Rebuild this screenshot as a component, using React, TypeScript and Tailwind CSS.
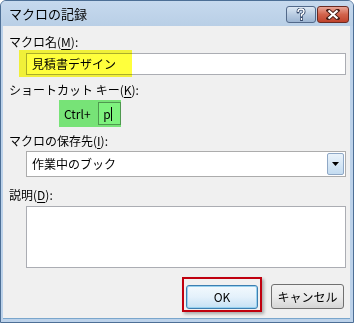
const font = { fontFamily: '"Noto Sans CJK JP", "Noto Sans", sans-serif' }

function Label({ text, keyChar }: { text: string; keyChar: string }) {
  return (
    <div className="h-[16px] text-[12px] leading-[16px] text-black">
      {text}(<span className="underline underline-offset-2">{keyChar}</span>):
    </div>
  )
}

function TitleBar() {
  return (
    <div className="h-[25px] flex items-center justify-between pl-[8px] pr-[4px] bg-gradient-to-b from-[#c6d9ee] to-[#b9cfe6]">
      <span className="text-[13px] text-black">マクロの記録</span>
      <div className="flex items-center gap-[1px] pt-[1px]">
        <div className="w-[30px] h-[17px] rounded-[3px] border border-[#52698a] bg-gradient-to-b from-[#dce7f3] via-[#b9cce2] to-[#9db5d2] flex items-center justify-center">
          <svg width="10" height="13" viewBox="0 0 10 13">
            <path d="M2 4 Q2 1 5 1 Q8 1 8 3.5 Q8 5.5 5.5 6.5 L5.5 8.5 M5.5 10 L5.5 12" fill="none" stroke="#34486a" strokeWidth="3" strokeLinecap="round" />
            <path d="M2 4 Q2 1 5 1 Q8 1 8 3.5 Q8 5.5 5.5 6.5 L5.5 8.5 M5.5 10 L5.5 12" fill="none" stroke="#ffffff" strokeWidth="1.4" />
          </svg>
        </div>
        <div className="w-[32px] h-[17px] rounded-[3px] border border-[#6a2a22] bg-gradient-to-b from-[#e8a597] via-[#d1634c] to-[#c0432c] flex items-center justify-center">
          <svg width="14" height="11" viewBox="0 0 14 11">
            <path d="M2.5 1.5 L11.5 9.5 M11.5 1.5 L2.5 9.5" stroke="#4a1e18" strokeWidth="4" strokeLinecap="square" />
            <path d="M2.5 1.5 L11.5 9.5 M11.5 1.5 L2.5 9.5" stroke="#ffffff" strokeWidth="2.2" />
          </svg>
        </div>
      </div>
    </div>
  )
}

export default function App() {
  return (
    <div
      className="w-[354px] h-[323px] flex flex-col bg-[#bcd2ea] border border-[#4d6f96] rounded-t-[6px] overflow-hidden"
      style={font}
    >
      <TitleBar />
      <div className="flex-1 flex pl-[2px] pr-[3px] pb-[3px]">
        <div className="flex-1 bg-[#f0f0f0] border-b border-[#7aa6cc] flex flex-col pl-[6px] pr-[4px] pt-[8px] relative">
          <Label text="マクロ名" keyChar="M" />
          <div className="relative mt-[3px] ml-[17px] h-[22px] border border-[#abadb3] bg-white flex items-center pl-[5px] text-[12px]">
            見積書デザイン
            <div className="absolute left-[-8px] top-[-4px] w-[113px] h-[27px] bg-[#ffff3c] mix-blend-multiply" />
          </div>
          <div className="mt-[7px]">
            <Label text="ショートカット キー" keyChar="K" />
          </div>
          <div className="relative mt-[2px] ml-[50px] h-[27px] w-[62px] flex items-center">
            <div className="absolute inset-0 bg-[#7ef27e] mix-blend-multiply z-10" />
            <span className="ml-[5px] text-[12px] w-[35px]">Ctrl+</span>
            <div className="w-[23px] h-[23px] border border-[#a0a0a0] bg-white flex items-center pl-[4px] text-[12px]">
              p<span className="inline-block w-[1px] h-[14px] bg-black" />
            </div>
          </div>
          <div className="mt-[6px]">
            <Label text="マクロの保存先" keyChar="I" />
          </div>
          <div className="mt-[2px] ml-[17px] h-[26px] border border-[#acacac] bg-white flex items-center justify-between">
            <span className="pl-[5px] text-[12px]">作業中のブック</span>
            <div className="w-[17px] h-[22px] mr-[1px] rounded-[2px] border border-[#8fa8c6] bg-gradient-to-b from-[#eaf3fb] to-[#c4dcf1] flex items-center justify-center">
              <svg width="7" height="4" viewBox="0 0 7 4"><path d="M0 0 L7 0 L3.5 4 Z" fill="#000" /></svg>
            </div>
          </div>
          <div className="mt-[10px]">
            <Label text="説明" keyChar="D" />
          </div>
          <div className="mt-[3px] ml-[17px] h-[62px] border border-[#abadb3] bg-white" />
          <div className="flex justify-end items-end gap-[9px] mt-[9px]">
            <div className="pt-[6px] px-[2px] pb-[1px] border-2 border-[#c0000e] shadow-[2px_2px_3px_rgba(0,0,0,0.3)]">
              <div className="w-[72px] h-[24px] rounded-[3px] border border-[#3c7fb1] shadow-[inset_0_0_0_1px_#98d1ef] bg-gradient-to-b from-[#f2f9fd] via-[#e4f1fb] to-[#c5e1f4] flex items-center justify-center text-[12px]">
                OK
              </div>
            </div>
            <div className="w-[73px] h-[25px] mb-[3px] mr-[2px] rounded-[3px] border border-[#707070] bg-gradient-to-b from-[#f2f2f2] via-[#ebebeb] to-[#d6d6d6] flex items-center justify-center text-[12px]">
              キャンセル
            </div>
          </div>
        </div>
      </div>
    </div>
  )
}
